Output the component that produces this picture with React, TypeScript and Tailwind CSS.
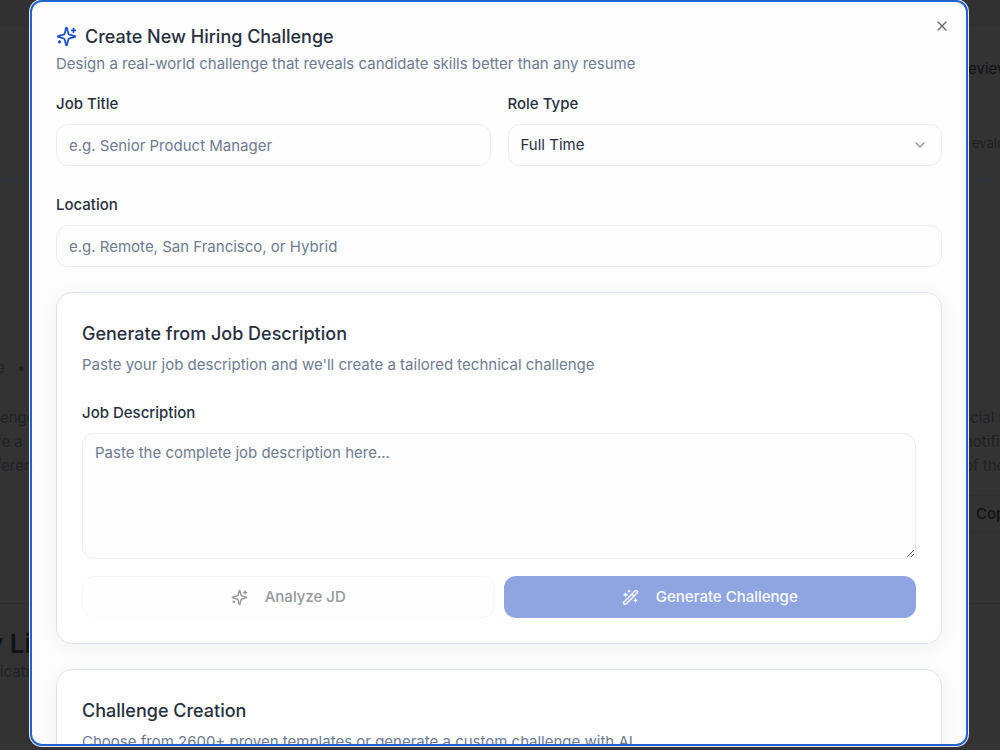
import { ChevronDown, WandSparkles, X } from "lucide-react";
import type { ReactNode } from "react";

function SparkleIcon({ className }: { className?: string }) {
  return (
    <svg
      viewBox="0 0 24 24"
      fill="none"
      stroke="currentColor"
      strokeWidth="2"
      strokeLinecap="round"
      strokeLinejoin="round"
      className={className}
      aria-hidden="true"
    >
      <path d="M9.937 15.5A2 2 0 0 0 8.5 14.063l-6.135-1.582a.5.5 0 0 1 0-.962L8.5 9.936A2 2 0 0 0 9.937 8.5l1.582-6.135a.5.5 0 0 1 .963 0L14.063 8.5A2 2 0 0 0 15.5 9.937l6.135 1.581a.5.5 0 0 1 0 .964L15.5 14.063a2 2 0 0 0-1.437 1.437l-1.582 6.135a.5.5 0 0 1-.963 0z" />
      <path d="M20 3v4" />
      <path d="M22 5h-4" />
      <path d="M4 17v2" />
      <path d="M5 18H3" />
    </svg>
  );
}

const fieldClass =
  "w-full rounded-xl border border-[#eaedf4] bg-[#fdfdfd] px-3 text-[15px] text-[#28303f] placeholder:text-[#6e7b91] outline-none";

function Field({ id, label, children }: { id: string; label: string; children: ReactNode }) {
  return (
    <div className="flex flex-col gap-2.5">
      <label htmlFor={id} className="text-[15px] leading-5 font-medium text-[#28303f]">
        {label}
      </label>
      {children}
    </div>
  );
}

function Card({ title, description, children }: { title: string; description: string; children?: ReactNode }) {
  return (
    <section className="rounded-2xl border border-[#dfe5ee] bg-white px-[25px] pt-[27px] pb-[25px] shadow-[0_4px_20px_rgba(30,41,59,0.05)]">
      <h3 className="text-lg leading-7 font-medium text-[#28303f]">{title}</h3>
      <p className="mt-1.5 text-[15px] leading-[22px] text-[#6e7b91]">{description}</p>
      {children}
    </section>
  );
}

function PageBehind() {
  return (
    <div className="flex min-h-screen justify-between bg-[#333333] text-[15px] leading-6 whitespace-nowrap text-[#1f2226]">
      <div className="w-8 overflow-hidden">
        <div className="h-[26px] border-b border-[#2f3134] bg-[#313131]" />
        <div className="h-[154px] border-b-2 border-[#2f3236]" />
        <p className="-ml-1 mt-[176px] flex gap-3">
          <span>e</span>
          <span>•</span>
        </p>
        <p className="mt-[26px]">enge</p>
        <p className="-ml-1">re a</p>
        <p className="-ml-1">feren</p>
        <div className="mt-[125px] border-t border-[#2c2e30]" />
        <h2 className="-ml-3 mt-6 text-[26px] leading-8 font-semibold text-[#101216]">y Li</h2>
        <p>icati</p>
      </div>
      <div className="w-8 overflow-hidden">
        <div className="h-[26px] border-b border-[#2f3134] bg-[#313131]" />
        <p className="mt-[31px] text-[#101216]">eview</p>
        <p className="mt-[50px] pl-1 text-[13px]">evalu</p>
        <div className="mt-[23px] border-t-2 border-[#2f3236]" />
        <p className="mt-[226px] pl-0.5">cial t</p>
        <p className="-ml-1">notifi</p>
        <p className="-ml-1">of the</p>
        <div className="mt-[17px] border-y border-[#2e3032] py-1.5 pl-2 font-medium text-[#101216]">Cop</div>
        <div className="mt-[70px] border-t border-[#2c2e30]" />
      </div>
    </div>
  );
}

export default function App() {
  return (
    <div className="relative h-screen overflow-hidden font-['Inter',sans-serif]">
      <div aria-hidden="true">
        <PageBehind />
      </div>
      <div className="absolute inset-0 flex pr-8 pb-1 pl-[30px]">
        <div
          role="dialog"
          aria-labelledby="dialog-title"
          className="relative flex-1 overflow-hidden rounded-xl border-2 border-[#1f62d0] bg-[#fdfdfd] p-6 shadow-[0_0_0_1px_#e8e8e8]"
        >
          <button
            type="button"
            aria-label="Close"
            className="absolute top-4 right-4 flex size-4 items-center justify-center text-[#686e78]"
          >
            <X className="size-4" />
          </button>
          <header>
            <h2 id="dialog-title" className="flex items-center gap-2 text-lg leading-5 font-medium text-[#28303f]">
              <SparkleIcon className="size-[21px] text-[#1d50d0]" />
              Create New Hiring Challenge
            </h2>
            <p className="mt-1.5 text-[15px] leading-[22px] text-[#6e7b91]">
              Design a real-world challenge that reveals candidate skills better than any resume
            </p>
          </header>
          <form className="mt-[19px]" onSubmit={(e) => e.preventDefault()}>
            <div className="grid grid-cols-2 gap-[17px]">
              <Field id="job-title" label="Job Title">
                <input id="job-title" type="text" placeholder="e.g. Senior Product Manager" className={`h-[42px] ${fieldClass}`} />
              </Field>
              <Field id="role-type" label="Role Type">
                <div className="relative">
                  <select id="role-type" defaultValue="full" className={`h-[42px] appearance-none ${fieldClass}`}>
                    <option value="full">Full Time</option>
                    <option value="part">Part Time</option>
                    <option value="contract">Contract</option>
                  </select>
                  <ChevronDown className="pointer-events-none absolute top-[13px] right-3.5 size-4 text-[#8f949d]" />
                </div>
              </Field>
            </div>
            <div className="mt-[29px]">
              <Field id="location" label="Location">
                <input id="location" type="text" placeholder="e.g. Remote, San Francisco, or Hybrid" className={`h-[42px] ${fieldClass}`} />
              </Field>
            </div>
            <div className="mt-[25px] flex flex-col gap-[25px]">
              <Card
                title="Generate from Job Description"
                description="Paste your job description and we'll create a tailored technical challenge"
              >
                <div className="mt-[27px]">
                  <Field id="job-description" label="Job Description">
                    <textarea
                      id="job-description"
                      placeholder="Paste the complete job description here..."
                      className={`block h-[126px] resize-y py-2 leading-[22px] ${fieldClass}`}
                    />
                  </Field>
                </div>
                <div className="mt-[17px] grid grid-cols-2 gap-[9px] text-[15px] font-medium">
                  <button
                    type="button"
                    disabled
                    className="flex h-[42px] items-center justify-center gap-[17px] rounded-xl border border-[#f5f6f9] bg-[#fefefe] text-[#94989f]"
                  >
                    <SparkleIcon className="size-[17px]" />
                    Analyze JD
                  </button>
                  <button
                    type="button"
                    disabled
                    className="flex h-[42px] items-center justify-center gap-[17px] rounded-xl bg-[#8ea5e2] text-[#fbfcfe]"
                  >
                    <WandSparkles className="size-[17px]" />
                    Generate Challenge
                  </button>
                </div>
              </Card>
              <Card
                title="Challenge Creation"
                description="Choose from 2600+ proven templates or generate a custom challenge with AI"
              />
            </div>
          </form>
        </div>
      </div>
    </div>
  );
}
